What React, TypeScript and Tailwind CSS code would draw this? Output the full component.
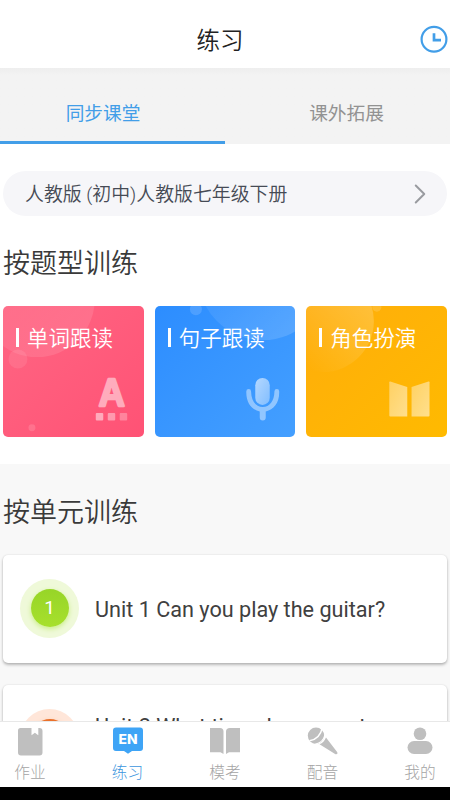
import { ReactNode } from "react";
import { ChevronRight } from "lucide-react";

const tabs = ["同步课堂", "课外拓展"];

const units = [
  {
    id: 1,
    title: "Unit 1 Can you play the guitar?",
    ring: "bg-[#eff9d9]",
    dot: "bg-gradient-to-b from-[#97d528] to-[#a7e02c] shadow-[0_2px_5px_#c9ee86]",
    offset: "",
  },
  {
    id: 2,
    title: "Unit 2 What time do you go to",
    ring: "bg-[#ffe6d9]",
    dot: "bg-gradient-to-b from-[#e9702a] to-[#ff9550] shadow-[0_2px_5px_#ffc19c]",
    offset: "pb-[26px]",
  },
];

function WordArt() {
  return (
    <svg viewBox="0 0 141 131" className="col-start-1 row-start-1 h-full w-full">
      <defs>
        <linearGradient id="wordGlow" x1="0" y1="0" x2="1" y2="1">
          <stop offset="0" stopColor="#fff" stopOpacity="0.02" />
          <stop offset="1" stopColor="#fff" stopOpacity="0.13" />
        </linearGradient>
      </defs>
      <circle cx="34" cy="-7" r="58" fill="url(#wordGlow)" />
      <circle cx="15" cy="53" r="9.5" fill="#fff" opacity="0.09" />
      <circle cx="29" cy="122" r="3.5" fill="#fff" opacity="0.14" />
      <g opacity="0.5">
        <text
          x="109"
          y="100.500"
          textAnchor="middle"
          fontFamily="Inter, sans-serif"
          fontWeight="600"
          fontSize="37"
          textLength="26"
          lengthAdjust="spacingAndGlyphs"
          fill="#fff"
          stroke="#fff"
          strokeWidth="2.400"
          strokeLinejoin="round"
        >
          A
        </text>
      </g>
      <rect x="93" y="107" width="7.5" height="7.5" rx="1" fill="#fff" opacity="0.5" />
      <rect x="105" y="107" width="7.5" height="7.5" rx="1" fill="#fff" opacity="0.4" />
      <rect x="117" y="107" width="7.5" height="7.5" rx="1" fill="#fff" opacity="0.28" />
    </svg>
  );
}

function SentenceArt() {
  return (
    <svg viewBox="0 0 141 131" className="col-start-1 row-start-1 h-full w-full">
      <defs>
        <linearGradient id="micFill" x1="0" y1="0" x2="1" y2="1">
          <stop offset="0" stopColor="#fff" stopOpacity="0.62" />
          <stop offset="1" stopColor="#fff" stopOpacity="0.35" />
        </linearGradient>
        <linearGradient id="sentenceGlow" x1="0" y1="0" x2="1" y2="1">
          <stop offset="0" stopColor="#fff" stopOpacity="0" />
          <stop offset="1" stopColor="#fff" stopOpacity="0.17" />
        </linearGradient>
      </defs>
      <circle cx="108" cy="-31" r="65" fill="url(#sentenceGlow)" />
      <circle cx="41" cy="3" r="6" fill="#fff" opacity="0.14" />
      <rect x="100.500" y="72" width="14.500" height="27" rx="7.200" fill="url(#micFill)" />
      <path
        d="M91.500 85.500a2.300 2.300 0 0 1 4.800 0C96.500 95 101 101 108 101S119.500 95 119.700 85.500a2.300 2.300 0 0 1 4.800 0C124.800 97 119 104 111 105.500v6a3 3 0 0 1-6 0V105.500C97 104 91.200 97 91.500 85.500z"
        fill="#fff"
        opacity="0.43"
      />
    </svg>
  );
}

function RoleArt() {
  return (
    <svg viewBox="0 0 141 131" className="col-start-1 row-start-1 h-full w-full">
      <defs>
        <linearGradient id="pageFill" x1="0" y1="0" x2="1" y2="1">
          <stop offset="0" stopColor="#fff" stopOpacity="0.38" />
          <stop offset="1" stopColor="#fff" stopOpacity="0.55" />
        </linearGradient>
        <linearGradient id="roleGlow" x1="0" y1="1" x2="1" y2="0">
          <stop offset="0.2" stopColor="#fff" stopOpacity="0" />
          <stop offset="1" stopColor="#fff" stopOpacity="0.26" />
        </linearGradient>
      </defs>
      <circle cx="17" cy="15" r="51" fill="url(#roleGlow)" />
      <circle cx="71" cy="1" r="4.500" fill="#fff" opacity="0.15" />
      <path d="M84.500 75.500 101.500 81v29.500h-17a1 1 0 0 1-1-1V76.200q0-1 1-.7z" fill="url(#pageFill)" />
      <path d="M122.800 75.500 105.800 81v29.500h17a1 1 0 0 0 1-1V76.200q0-1-1-.7z" fill="url(#pageFill)" />
    </svg>
  );
}

function TrainingCard({
  title,
  color,
  children,
}: {
  title: string;
  color: string;
  children: ReactNode;
}) {
  return (
    <button className={`grid h-[131px] overflow-hidden rounded-[5px] text-left ${color}`}>
      {children}
      <span className="z-10 col-start-1 row-start-1 flex items-center gap-[8px] self-start pt-[17px] pl-[13px]">
        <span className="mb-[4px] h-[19px] w-[3px] bg-white" />
        <span className="text-[21.500px] leading-[32px] font-[350] whitespace-nowrap text-white">
          {title}
        </span>
      </span>
    </button>
  );
}

function HomeworkIcon() {
  return (
    <svg width="32" height="30" viewBox="0 0 32 30" fill="#bfbfbf">
      <path d="M6.500 2H17.500V9.200L20.900 6.800 24.300 9.200V2H25.500A3 3 0 0 1 28.500 5V26.500A3 3 0 0 1 25.500 29.500H7A3 3 0 0 1 4 26.500V4.500A2.500 2.500 0 0 1 6.500 2z" />
    </svg>
  );
}

function PracticeIcon() {
  return (
    <svg width="32" height="30" viewBox="0 0 32 30">
      <path
        d="M4 1.500H28A3 3 0 0 1 31 4.500V22A3 3 0 0 1 28 25H20L16 27.700 12 25H4A3 3 0 0 1 1 22V4.500A3 3 0 0 1 4 1.500z"
        fill="#3ea4f6"
      />
      <text
        x="16"
        y="18"
        textAnchor="middle"
        fontFamily="Inter, sans-serif"
        fontWeight="800"
        fontSize="12.500"
        textLength="19"
        lengthAdjust="spacingAndGlyphs"
        fill="#fff"
      >
        EN
      </text>
    </svg>
  );
}

function ExamIcon() {
  return (
    <svg width="32" height="30" viewBox="0 0 32 30" fill="#bfbfbf">
      <path d="M1 2H11Q14.500 2 14.500 5.500V28L11.500 26.200H1z" />
      <path d="M31 2H21Q17 2 17 5.500V28L20 26.200H31z" />
    </svg>
  );
}

function DubbingIcon() {
  return (
    <svg width="32" height="30" viewBox="0 0 32 30" fill="#bfbfbf">
      <circle cx="9" cy="9.700" r="8.200" />
      <path d="M19 11.500 30.300 26.300Q31.200 28.700 28.500 28.200L12.500 18.200Q17 16.500 19 11.500z" />
      <path d="M2.500 14.800Q13 13 15.200 2" fill="none" stroke="#fff" strokeWidth="1.400" />
      <path d="M8 18.300Q16.500 16.500 18 8.500" fill="none" stroke="#fff" strokeWidth="1.200" />
    </svg>
  );
}

function MineIcon() {
  return (
    <svg width="32" height="30" viewBox="0 0 32 30" fill="#bfbfbf">
      <circle cx="16" cy="7.800" r="6.300" />
      <rect x="3.500" y="15" width="25" height="13" rx="6.500" />
    </svg>
  );
}

const navItems = [
  { label: "作业", icon: <HomeworkIcon /> },
  { label: "练习", icon: <PracticeIcon />, active: true },
  { label: "模考", icon: <ExamIcon /> },
  { label: "配音", icon: <DubbingIcon /> },
  { label: "我的", icon: <MineIcon /> },
];

export default function App() {
  return (
    <div className="flex h-[800px] w-[450px] flex-col overflow-hidden bg-white font-[Roboto,'Noto_Sans_CJK_SC',sans-serif]">
      <header className="grid h-[68px] shrink-0 grid-cols-[1fr_auto_1fr] items-center pt-[11px]">
        <span />
        <h1 className="pt-[2px] pr-[10px] text-[23.500px] leading-8 font-[350] text-[#222]">练习</h1>
        <button className="justify-self-end pr-[2px]">
          <svg
            className="overflow-visible"
            width="28"
            height="28"
            viewBox="0 0 28 28"
            fill="none"
            stroke="#429ee8"
          >
            <circle cx="14" cy="13.200" r="12.400" strokeWidth="2.200" />
            <path d="M14 7.200V14.200H21" strokeWidth="2.700" />
          </svg>
        </button>
      </header>

      <nav className="grid h-[76px] shrink-0 grid-cols-2 bg-gradient-to-b from-[#eeeeee] to-[#f3f3f3] to-10%">
        {tabs.map((tab, i) => (
          <button
            key={tab}
            className={`border-b-3 pt-[18px] text-[18.700px] leading-7 ${
              i === 0
                ? "border-[#429ee8] pr-[19px] text-[#429ee8]"
                : "border-transparent pl-[18px] text-[#929292]"
            }`}
          >
            {tab}
          </button>
        ))}
      </nav>

      <main className="flex min-h-0 flex-1 flex-col overflow-hidden">
        <section className="h-[320px] shrink-0 px-[3px] pt-[27px]">
          <button className="flex h-[45px] w-full items-center justify-between rounded-full bg-[#f6f6f9] pr-[10px] pl-[22px]">
            <span className="pt-[2px] text-[18.900px] leading-7 font-[350] text-[#464b55]">
              人教版 (初中)人教版七年级下册
            </span>
            <ChevronRight className="size-[34px] text-[#999ba0]" strokeWidth={1.4} />
          </button>
          <h2 className="mt-[28px] h-10 text-[27px] leading-10 font-[350] text-[#3a3a3a]">
            按题型训练
          </h2>
          <div className="mt-[22px] grid grid-cols-3 gap-[11px]">
            <TrainingCard title="单词跟读" color="bg-gradient-to-br from-[#ff6583] to-[#ff5275]">
              <WordArt />
            </TrainingCard>
            <TrainingCard title="句子跟读" color="bg-gradient-to-br from-[#2c8dff] to-[#449fff]">
              <SentenceArt />
            </TrainingCard>
            <TrainingCard title="角色扮演" color="bg-gradient-to-br from-[#ffad0b] to-[#ffba00]">
              <RoleArt />
            </TrainingCard>
          </div>
        </section>

        <section className="flex-1 bg-[#f8f8f8] px-[3px] pt-[29px]">
          <h2 className="h-10 text-[27px] leading-10 font-[350] text-[#3a3a3a]">按单元训练</h2>
          <div className="mt-[22px] flex flex-col gap-[22px]">
            {units.map((unit) => (
              <div
                key={unit.id}
                className="flex h-[108px] items-center rounded-[5px] bg-white pl-[17px] shadow-[0_2px_3px_rgba(0,0,0,0.25),0_0_2px_rgba(0,0,0,0.12)]"
              >
                <span
                  className={`mb-[2px] flex size-[59px] items-center justify-center rounded-full ${unit.ring}`}
                >
                  <span
                    className={`flex size-[38px] items-center justify-center rounded-full text-[19px] text-white ${unit.dot}`}
                  >
                    {unit.id}
                  </span>
                </span>
                <span
                  className={`ml-[16px] pt-[1px] text-[21.640px] leading-8 whitespace-nowrap text-[#404040] ${unit.offset}`}
                >
                  {unit.title}
                </span>
              </div>
            ))}
          </div>
        </section>
      </main>

      <footer className="z-10 flex h-[66px] shrink-0 justify-between border-t border-[#e8e8e8] bg-white">
        {navItems.map((item) => (
          <button
            key={item.label}
            className={`flex w-[60px] flex-col items-center pt-[4px] text-[15.700px] leading-6 font-light ${
              item.active ? "text-[#3c96de]" : "text-[#a4a4a4]"
            }`}
          >
            {item.icon}
            <span className="mt-[5px]">{item.label}</span>
          </button>
        ))}
      </footer>
      <div className="h-[13px] shrink-0 bg-black" />
    </div>
  );
}
